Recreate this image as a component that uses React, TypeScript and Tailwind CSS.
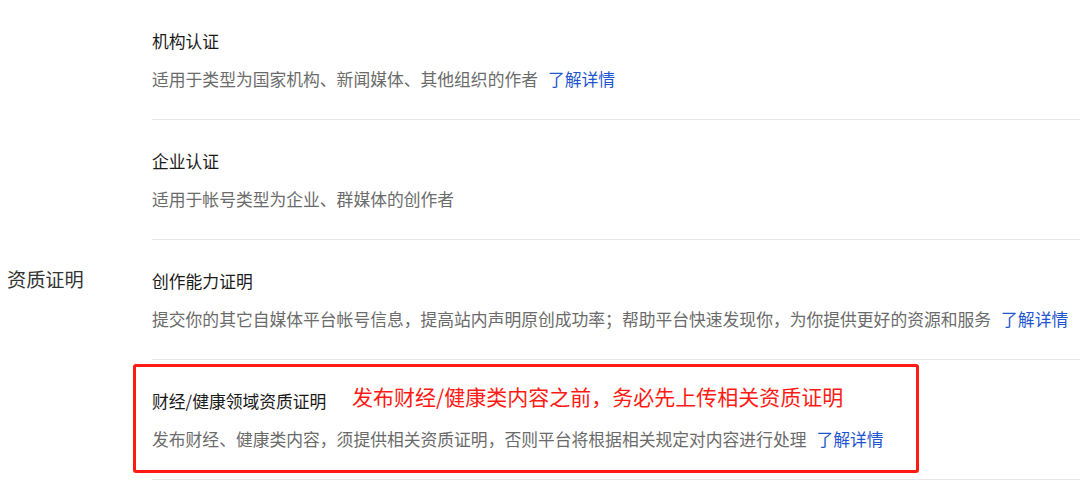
// 认证与资质证明列表（截图复刻）
const FONT = "font-['Microsoft_YaHei','Noto_Sans_CJK_SC',sans-serif]";

type Item = {
  title: string;
  desc: string;
  link?: boolean;
  note?: string;
};

const groups: { label: string; items: Item[] }[] = [
  {
    label: "",
    items: [
      {
        title: "机构认证",
        desc: "适用于类型为国家机构、新闻媒体、其他组织的作者",
        link: true,
      },
      {
        title: "企业认证",
        desc: "适用于帐号类型为企业、群媒体的创作者",
      },
    ],
  },
  {
    label: "资质证明",
    items: [
      {
        title: "创作能力证明",
        desc: "提交你的其它自媒体平台帐号信息，提高站内声明原创成功率；帮助平台快速发现你，为你提供更好的资源和服务",
        link: true,
      },
      {
        title: "财经/健康领域资质证明",
        desc: "发布财经、健康类内容，须提供相关资质证明，否则平台将根据相关规定对内容进行处理",
        link: true,
        note: "发布财经/健康类内容之前，务必先上传相关资质证明",
      },
    ],
  },
];

function Row({ item }: { item: Item }) {
  return (
    <div className="relative pt-[31px] pb-[30px] border-b border-[#e8e8e8]">
      <div className="text-[16.8px] leading-[20px] h-[20px] text-[#1a1a1a] whitespace-nowrap">
        {item.title}
      </div>
      <div className="mt-[18px] text-[16.8px] leading-[20px] h-[20px] text-[#6b6b6b] whitespace-nowrap">
        {item.desc}
        {item.link && (
          <a className="ml-[10px] text-[#1f55cf] cursor-pointer">了解详情</a>
        )}
      </div>
      {item.note && (
        <>
          <div className="absolute left-[-19px] top-[4px] w-[786px] h-[109px] border-[3px] border-[#ff1a14] rounded-[3px] pointer-events-none" />
          <div className="absolute left-[200px] top-[23px] text-[21px] leading-[26px] text-[#ff1a14] whitespace-nowrap">
            {item.note}
          </div>
        </>
      )}
    </div>
  );
}

export default function App() {
  return (
    <div className={`w-[1080px] h-[490px] overflow-hidden bg-white ${FONT}`}>
      {groups.map((g, i) => (
        <div key={i} className="flex">
          <div className="w-[152px] shrink-0 pl-[7px] pt-[27px] text-[19.2px] leading-[24px] text-[#333]">
            {g.label}
          </div>
          <div className="flex-1 min-w-0">
            {g.items.map((it) => (
              <Row key={it.title} item={it} />
            ))}
          </div>
        </div>
      ))}
    </div>
  );
}
